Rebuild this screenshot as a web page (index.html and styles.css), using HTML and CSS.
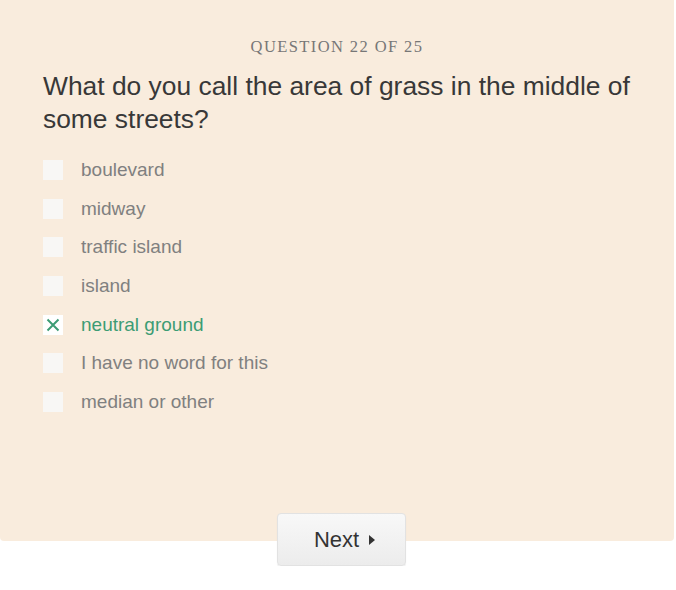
FILE: index.html
```html
<!DOCTYPE html>
<html lang="en">
<head>
    <meta charset="UTF-8">
    <meta name="viewport" content="width=device-width, initial-scale=1.0">
    <title>Dialect Quiz</title>
    <link rel="stylesheet" href="styles.css">
</head>
<body>
    <div class="quiz">
        <p class="counter">QUESTION 22 OF 25</p>
        <h2 class="question">What do you call the area of grass in the middle of some streets?</h2>

        <ul class="answers">
            <li class="answer"><span class="box"></span>boulevard</li>
            <li class="answer"><span class="box"></span>midway</li>
            <li class="answer"><span class="box"></span>traffic island</li>
            <li class="answer"><span class="box"></span>island</li>
            <li class="answer picked">
                <span class="box">
                    <svg width="14" height="14" viewBox="0 0 14 14"><path d="M1.5 1.5 L12.5 12.5 M12.5 1.5 L1.5 12.5" stroke="#3c9c74" stroke-width="2" fill="none"/></svg>
                </span>neutral ground
            </li>
            <li class="answer"><span class="box"></span>I have no word for this</li>
            <li class="answer"><span class="box"></span>median or other</li>
        </ul>
    </div>

    <div class="actions">
        <button class="next">Next <span class="arrow"></span></button>
    </div>
</body>
</html>
```

FILE: styles.css
```css
body {
    margin: 0;
    font-family: "Liberation Sans", Arial, sans-serif;
    background: #fff;
}
.quiz {
    width: 674px;
    height: 541px;
    box-sizing: border-box;
    padding: 38px 43px 0;
    background-color: #f9ecdd;
    border-radius: 0 0 4px 4px;
}
.counter {
    margin: 0;
    text-align: center;
    font-family: "Liberation Serif", "Times New Roman", serif;
    font-size: 16.5px;
    letter-spacing: 1.4px;
    line-height: 18px;
    color: #777;
}
.question {
    margin: 14px 0 0;
    font-size: 26.4px;
    font-weight: normal;
    line-height: 33px;
    color: #383838;
}
.answers {
    list-style: none;
    margin: 24px 0 0;
    padding: 0;
}
.answer {
    display: flex;
    align-items: center;
    height: 20px;
    margin-bottom: 18.7px;
    font-size: 19px;
    color: #808080;
}
.box {
    display: flex;
    align-items: center;
    justify-content: center;
    width: 20px;
    height: 20px;
    margin-right: 18px;
    background: #f8f7f5;
}
.picked {
    color: #3c9c74;
}
.picked .box {
    background: #fff;
}
.actions {
    display: flex;
    justify-content: center;
    width: 674px;
    margin-top: -28px;
    padding-left: 9px;
    box-sizing: border-box;
}
.next {
    width: 129px;
    height: 53px;
    border: 1px solid #e2e2e2;
    border-radius: 4px;
    background: linear-gradient(#f8f8f8, #ececec);
    box-shadow: 0 1px 1px rgba(0, 0, 0, 0.08);
    font-family: "Liberation Sans", Arial, sans-serif;
    font-size: 22px;
    color: #333;
    cursor: pointer;
    display: flex;
    align-items: center;
    justify-content: center;
    gap: 10px;
    padding: 0 0 0 6px;
}
.arrow {
    width: 0;
    height: 0;
    border-top: 5px solid transparent;
    border-bottom: 5px solid transparent;
    border-left: 6px solid #333;
}
```
